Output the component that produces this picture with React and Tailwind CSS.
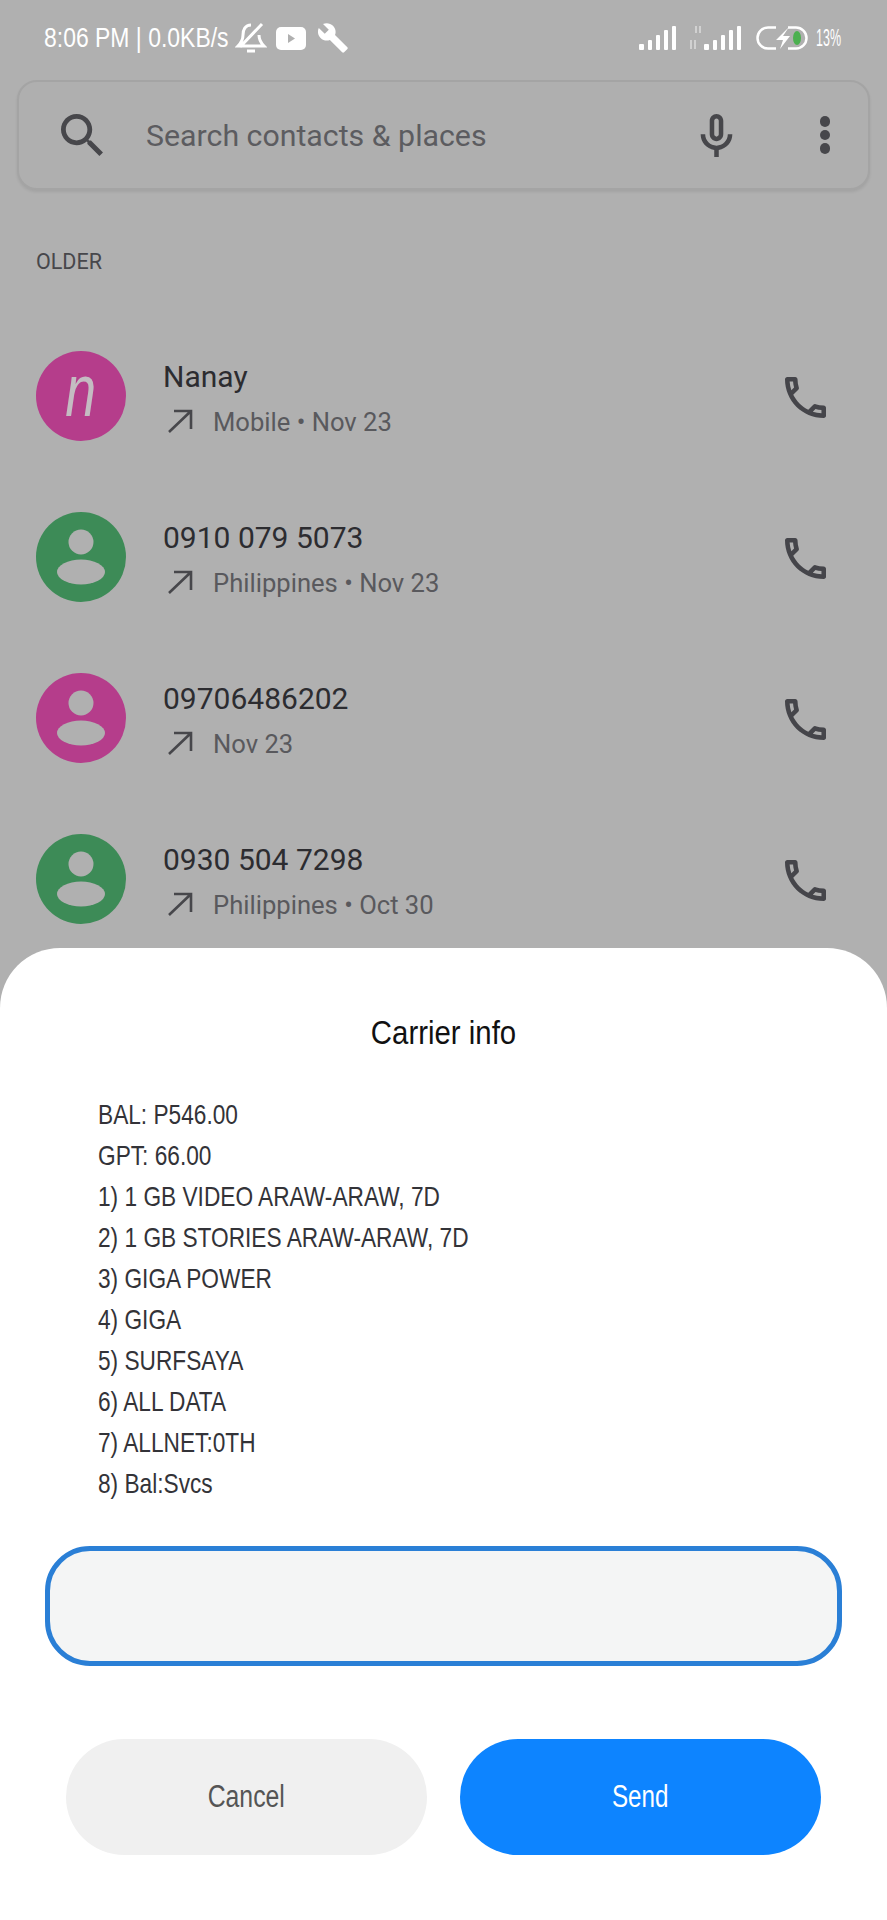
import React from "react";

const hand = "font-['Liberation_Sans',sans-serif]";
const lines = ["BAL: P546.00","GPT: 66.00","1) 1 GB VIDEO ARAW-ARAW, 7D","2) 1 GB STORIES ARAW-ARAW, 7D","3) GIGA POWER","4) GIGA","5) SURFSAYA","6) ALL DATA","7) ALLNET:0TH","8) Bal:Svcs"];
const rows = [
  { name: "Nanay", sub: "Mobile • Nov 23", color: "bg-[#b53d8b]", letter: "n" },
  { name: "0910 079 5073", sub: "Philippines • Nov 23", color: "bg-[#3d8b57]" },
  { name: "09706486202", sub: "Nov 23", color: "bg-[#b53d8b]" },
  { name: "0930 504 7298", sub: "Philippines • Oct 30", color: "bg-[#3d8b57]" },
];

function Signal({ small }) {
  return (
    <svg width={small ? 53 : 39} height="26" viewBox={small ? "0 0 53 26" : "0 0 39 26"} className="shrink-0">
      {small && <g fill="#e4e4e4" opacity=".65"><rect x="5" y="1" width="2" height="7" /><rect x="9" y="1" width="2" height="7" /><rect x="0" y="15" width="2" height="9" /><rect x="4" y="15" width="2" height="9" /></g>}
      <g fill="#fff" transform={small ? "translate(14 0)" : undefined}>
        <rect x="0" y="19" width="5" height="6" rx="1" />
        <rect x="9" y="15" width="4" height="10" rx="1" />
        <rect x="17" y="10" width="4" height="15" rx="1" />
        <rect x="25" y="5" width="4" height="20" rx="1" />
        <rect x="33" y="1" width="4" height="24" rx="1" />
      </g>
    </svg>
  );
}

function Phone() {
  return (
    <svg width="41" height="41" viewBox="3 3 18 18" fill="#45454a" className="mb-[4px] shrink-0">
      <path d="M6.54 5c.06.89.21 1.76.45 2.59l-1.2 1.2c-.41-1.2-.67-2.47-.76-3.79h1.51m9.86 12.02c.85.24 1.72.39 2.6.45v1.49c-1.32-.09-2.59-.35-3.8-.75l1.2-1.19M7.5 3H4c-.55 0-1 .45-1 1 0 9.39 7.61 17 17 17 .55 0 1-.45 1-1v-3.49c0-.55-.45-1-1-1-1.24 0-2.45-.2-3.57-.57-.1-.04-.21-.05-.31-.05-.26 0-.51.1-.71.29l-2.2 2.2c-2.83-1.45-5.15-3.76-6.59-6.59l2.2-2.2c.28-.28.36-.67.25-1.02C8.7 6.45 8.5 5.25 8.5 4c0-.55-.45-1-1-1z" />
    </svg>
  );
}

function Row({ r }) {
  return (
    <div className="flex h-[161px] items-center pl-[36px] pr-[61px] shrink-0">
      <div className={`mb-[7px] flex h-[90px] w-[90px] shrink-0 items-center justify-center rounded-full ${r.color}`}>
        {r.letter ? (
          <span className={`${hand} inline-block scale-x-[.75] text-[74px] italic leading-none text-[#c4bcc2] pb-[10px]`}>n</span>
        ) : (
          <svg width="90" height="90" viewBox="0 0 90 90" fill="#b0b0b0">
            <circle cx="45" cy="30" r="12.5" />
            <ellipse cx="45" cy="60" rx="24" ry="12.5" />
          </svg>
        )}
      </div>
      <div className="ml-[37px] flex flex-1 flex-col">
        <div className="font-['Roboto',sans-serif] text-[30px] leading-[40px] text-[#2c2c30]">{r.name}</div>
        <div className="mt-[6px] flex h-[40px] items-center">
          <svg width="26" height="26" viewBox="0 0 26 26" fill="none" stroke="#47474b" strokeWidth="2.6" className="mb-[4px] ml-[4px] shrink-0">
            <path d="M2 24 24 3M7 3h17v18" />
          </svg>
          <span className="ml-[20px] font-['Roboto',sans-serif] text-[25.6px] text-[#59595d]">{r.sub}</span>
        </div>
      </div>
      <Phone />
    </div>
  );
}

export default function App() {
  return (
    <div className="flex h-[1920px] w-[887px] flex-col overflow-hidden bg-[#b0b0b0]">
      <div className="flex h-[948px] flex-col overflow-hidden shrink-0">
        <div className="flex h-[76px] shrink-0 items-center pl-[44px] pr-[45px] text-white">
          <span className={`${hand} inline-block w-[186px] origin-left scale-x-[.85] whitespace-nowrap text-[27px] leading-none`}>8:06 PM | 0.0KB/s</span>
          <svg width="32" height="32" viewBox="0 0 32 32" fill="none" stroke="#fff" strokeWidth="3" className="ml-[5px]">
            <path d="M16 3c-6 0-8 5-8 10 0 5-2 8-5 11h26c-3-3-5-6-5-11M12 29h8M27 2 5 25" />
          </svg>
          <svg width="30" height="23" viewBox="0 0 30 23" className="ml-[9px]">
            <rect width="30" height="23" rx="5" fill="#fff" />
            <path d="M12 7l7 4.5-7 4.5z" fill="#b0b0b0" />
          </svg>
          <svg width="30" height="30" viewBox="1 1 22.2 22.2" fill="#fff" className="ml-[12px]">
            <path d="M22.7 19l-9.1-9.1c.9-2.3.4-5-1.5-6.9-2-2-5-2.4-7.4-1.3L9 6 6 9 1.6 4.7C.4 7.1.9 10.1 2.9 12.1c1.9 1.9 4.6 2.4 6.9 1.5l9.1 9.1c.4.4 1 .4 1.4 0l2.3-2.3c.5-.4.5-1.1.1-1.4z" />
          </svg>
          <div className="flex-1" />
          <Signal />
          <div className="ml-[12px]"><Signal small /></div>
          <svg width="52" height="24" viewBox="0 0 52 24" fill="none" className="ml-[13px]">
            <rect x="1.5" y="1.5" width="49" height="21" rx="10.5" stroke="#fff" strokeWidth="2.5" />
            <rect x="20" y="0" width="12" height="24" fill="#b0b0b0" />
            <path d="M33 1 20 14h7l-3 9 10-13h-7z" fill="#fff" />
            <ellipse cx="41" cy="12" rx="4" ry="7" fill="#4cb050" />
          </svg>
          <span className={`${hand} ml-[8px] inline-block w-[26px] origin-left scale-x-[.52] whitespace-nowrap text-[24px] leading-none`}>13%</span>
        </div>

        <div className="mx-[17px] mt-[4px] flex h-[110px] shrink-0 items-center rounded-[20px] border-2 border-[#a4a4a4] bg-[#afafaf] pl-[42px] pr-[38px] shadow-[0_2px_3px_rgba(0,0,0,0.08)]">
          <svg width="42" height="42" viewBox="3 3 17.5 17.5" fill="#47474b" className="shrink-0">
            <path d="M15.5 14h-.79l-.28-.27C15.41 12.59 16 11.11 16 9.5 16 5.91 13.09 3 9.5 3S3 5.91 3 9.5 5.91 16 9.5 16c1.61 0 3.09-.59 4.23-1.57l.27.28v.79l5 4.99L20.49 19l-4.99-5zm-6 0C7.01 14 5 11.99 5 9.5S7.01 5 9.5 5 14 7.01 14 9.5 11.99 14 9.5 14z" />
          </svg>
          <span className="ml-[43px] flex-1 pt-[2px] font-['Roboto',sans-serif] text-[30.3px] text-[#5c5c60]">Search contacts &amp; places</span>
          <svg width="35" height="43" viewBox="5 2 14 19" fill="#47474b" className="mr-[2px] shrink-0">
            <path d="M12 14c1.66 0 3-1.34 3-3V5c0-1.66-1.34-3-3-3S9 3.34 9 5v6c0 1.66 1.34 3 3 3zm-1-9c0-.55.45-1 1-1s1 .45 1 1v6c0 .55-.45 1-1 1s-1-.45-1-1V5z" />
            <path d="M17 11c0 2.76-2.24 5-5 5s-5-2.24-5-5H5c0 3.53 2.61 6.43 6 6.92V21h2v-3.08c3.39-.49 6-3.39 6-6.92h-2z" />
          </svg>
          <div className="ml-[84px] flex shrink-0 flex-col gap-[3px]">
            <span className="h-[10.5px] w-[10.5px] rounded-full bg-[#47474b]" />
            <span className="h-[10.5px] w-[10.5px] rounded-full bg-[#47474b]" />
            <span className="h-[10.5px] w-[10.5px] rounded-full bg-[#47474b]" />
          </div>
        </div>

        <div className="mt-[58px] h-[28px] shrink-0 pl-[36px] font-['Roboto',sans-serif] text-[21.5px] leading-[28px] text-[#47474b]">OLDER</div>
        <div className="mt-[43px] flex flex-col">
          {rows.map((r) => <Row key={r.name} r={r} />)}
        </div>
      </div>

      <div className="flex-1 rounded-t-[60px] bg-white pt-[65px]">
        <div className={`${hand} scale-x-[.89] text-center text-[33px] leading-[40px] text-[#111]`}>Carrier info</div>
        <div className={`${hand} mt-[41px] pl-[98px] text-[28px] leading-[41px] text-[#333338]`}>
          {lines.map((l) => <div key={l} className="origin-left scale-x-[.81] whitespace-nowrap">{l}</div>)}
        </div>
        <div className="mx-[45px] mt-[42px] h-[120px] rounded-[45px] border-[5px] border-[#2a7fd6] bg-[#f4f5f5]" />
        <div className="mx-[66px] mt-[73px] flex gap-[33px]">
          <div className={`${hand} flex h-[116px] flex-1 items-center justify-center rounded-[58px] bg-[#f0f0f0] text-[31px] text-[#555]`}><span className="inline-block scale-x-[.8]">Cancel</span></div>
          <div className={`${hand} flex h-[116px] flex-1 items-center justify-center rounded-[58px] bg-[#0d84ff] text-[31px] text-white`}><span className="inline-block scale-x-[.78]">Send</span></div>
        </div>
      </div>
    </div>
  );
}
